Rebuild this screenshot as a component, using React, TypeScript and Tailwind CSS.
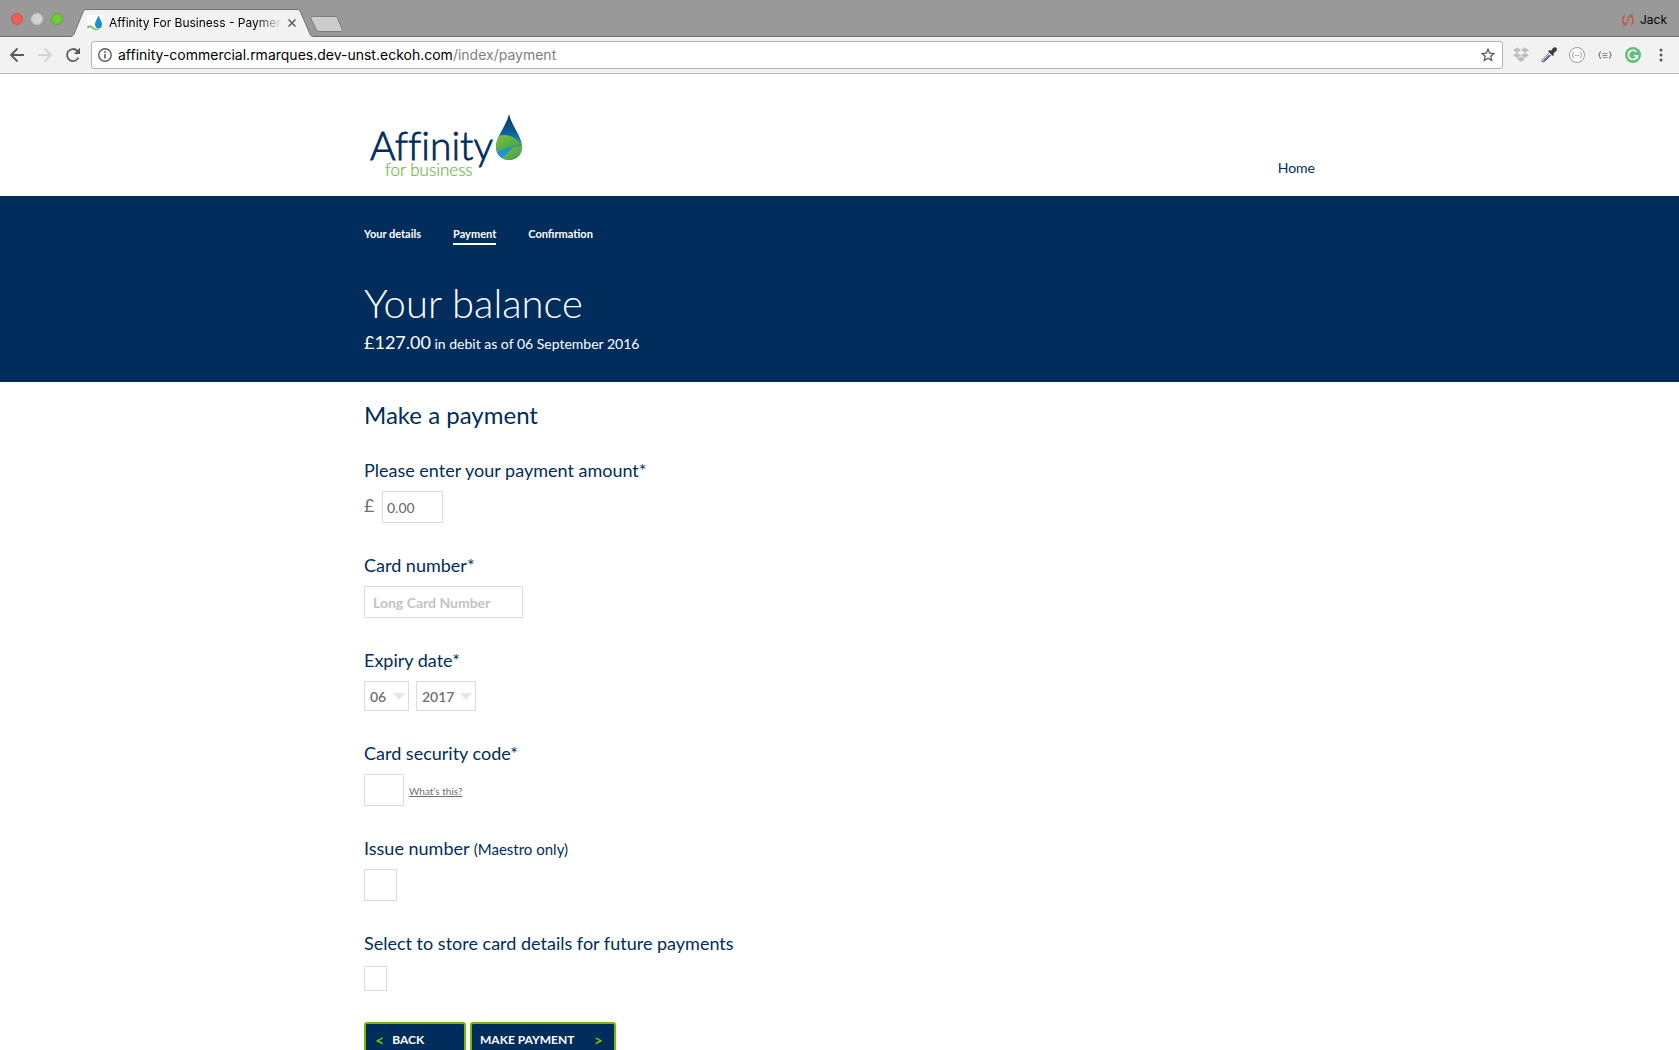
import React from "react";

function TrafficLights() {
  return (
    <div className="flex gap-2 pt-[13px] pl-[11px]">
      <button aria-label="Close window" className="size-3 rounded-full border border-[#dc4f48] bg-[#ec6059]" />
      <button aria-label="Minimise window" className="size-3 rounded-full border border-[#c6c6c6] bg-[#d2d2d2]" />
      <button aria-label="Zoom window" className="size-3 rounded-full border border-[#52ad29] bg-[#6bcb3b]" />
    </div>
  );
}

function Favicon() {
  return (
    <svg viewBox="0 0 16 16" className="size-4 shrink-0" aria-hidden="true">
      <rect width="16" height="16" fill="#fff" />
      <path d="M11.5 0C12.5 4 15 6 15 9.5C15 12 13.500 13.500 11.500 13.500C9.500 13.500 8 12 8 9.500C8 6 10.500 4 11.500 0Z" fill="#1592cf" />
      <path d="M0 11.500C2.500 9 5 10.500 7 12.500C9 14.500 12 14 13.500 12.500C12.500 15.500 8 16.500 5.500 14C3.500 12 2 12.500 0 13.500Z" fill="#8cc474" />
    </svg>
  );
}

function TabStrip() {
  return (
    <div className="flex h-[37px] items-start bg-[#999999] text-black shadow-[inset_0_-1px_0_#707070]">
      <TrafficLights />
      <div className="relative ml-2 flex h-7 w-[243px] items-center self-end pr-[18px] pl-4">
        <svg viewBox="0 0 243 28" className="absolute inset-0 h-7 w-[243px]" aria-hidden="true">
          <path d="M0 27.500C2 27 2.500 26 3 25L12 3C12.700 1.300 13.500 .5 15 .5H226C228 .5 228.800 1.300 229.500 3L239 25C239.500 26.500 240.500 27.500 243 27.500V28H0Z" fill="#f2f2f2" />
          <path d="M0 27.500C2 27 2.500 26 3 25L12 3C12.700 1.300 13.500 .5 15 .5H226C228 .5 228.800 1.300 229.500 3L239 25C239.500 26.500 240.500 27.500 243 27.500" fill="none" stroke="#6e6e6e" />
        </svg>
        <div className="relative flex min-w-0 flex-1 items-center gap-[6px]">
          <Favicon />
          <span className="w-[174px] overflow-hidden text-[12px] leading-4 whitespace-nowrap [mask-image:linear-gradient(to_right,black_85%,transparent)]">
            Affinity For Business - Payment
          </span>
          <button aria-label="Close tab" className="shrink-0">
            <svg viewBox="0 0 8 8" className="size-2" aria-hidden="true">
              <path d="M.5 .5L7.500 7.500M7.500 .5L.5 7.500" stroke="#5a5a5a" strokeWidth="1.500" />
            </svg>
          </button>
        </div>
      </div>
      <button aria-label="New tab" className="mt-4 -ml-1">
        <svg viewBox="0 0 33 16" className="h-4 w-[33px]" aria-hidden="true">
          <path d="M2.500 .5H25C26.500 .5 27 1 27.500 2L32 13C32.500 14.500 32 15.500 30.500 15.500H9C7.500 15.500 7 15 6.500 14L1 2.500C.5 1.500 1 .5 2.500 .5Z" fill="#cccccc" stroke="#7d7d7d" />
        </svg>
      </button>
      <button className="mt-3 mr-3 ml-auto flex items-center gap-[6px] text-[12px] leading-4">
        <svg viewBox="0 0 12 12" className="size-3" fill="none" stroke="#c9503e" aria-hidden="true">
          <path d="M2.800 1.200C.2 3.500 .2 8 2.800 10.300M9.200 10.800C11.800 8.500 11.800 4 9.200 1.700" strokeWidth="1.400" />
          <path d="M3.800 8V11H.8M8.200 4V1H11.200" strokeWidth="1.200" />
          <path d="M6 2.500V7M6 8.200V9.500" strokeWidth="1.300" />
        </svg>
        Jack
      </button>
    </div>
  );
}

function Toolbar() {
  return (
    <div className="flex h-[37px] items-center border-b border-[#b6b6b6] bg-[#f2f2f2] pr-[11px] pl-[9px]">
      <div className="flex gap-[12px] text-[#5a5a5a]">
        <button aria-label="Back">
          <svg viewBox="0 0 16 16" className="size-4" fill="none" stroke="#5a5a5a" strokeWidth="1.800" aria-hidden="true">
            <path d="M15 8H2.500M8.500 1.500L2 8L8.500 14.500" />
          </svg>
        </button>
        <button aria-label="Forward">
          <svg viewBox="0 0 16 16" className="size-4" fill="none" stroke="#d4d4d4" strokeWidth="1.800" aria-hidden="true">
            <path d="M1 8H13.500M7.500 1.500L14 8L7.500 14.500" />
          </svg>
        </button>
        <button aria-label="Reload">
          <svg viewBox="0 0 16 16" className="size-4" aria-hidden="true">
            <path d="M13.500 10.500A6 6 0 1 1 12.300 3.800L14 5.500" fill="none" stroke="#5a5a5a" strokeWidth="1.800" />
            <path d="M15 .8V7H8.800Z" fill="#5a5a5a" />
          </svg>
        </button>
      </div>
      <div className="ml-[10px] flex h-7 flex-1 items-center rounded-[3px] border border-[#b3b3b3] bg-white pr-[7px] pl-[6px]">
        <svg viewBox="0 0 14 14" className="size-[14px]" aria-hidden="true">
          <circle cx="7" cy="7" r="6.200" fill="none" stroke="#5a5a5a" strokeWidth="1.400" />
          <path d="M7 6V10.500M7 3.300V4.900" stroke="#5a5a5a" strokeWidth="1.600" />
        </svg>
        <a href="#address" className="ml-[6px] flex-1 text-[14px] leading-5 text-black">
          affinity-commercial.rmarques.dev-unst.eckoh.com<span className="text-[#808080]">/index/payment</span>
        </a>
        <button aria-label="Bookmark this page">
          <svg viewBox="0 0 14 14" className="size-[14px]" fill="none" stroke="#5a5a5a" strokeWidth="1.300" aria-hidden="true">
            <path d="M7 1.200L8.700 5.100L13 5.500L9.800 8.300L10.700 12.500L7 10.300L3.300 12.500L4.200 8.300L1 5.500L5.300 5.100Z" />
          </svg>
        </button>
      </div>
      <div className="ml-[9px] flex items-center gap-[10px]">
        <button aria-label="Dropbox">
          <svg viewBox="0 0 18 18" className="size-[18px]" fill="#bdbdbd" aria-hidden="true">
            <path d="M5.200 1.500L9 4L5 6.700L1 4.200ZM12.800 1.500L17 4.200L13 6.700L9 4ZM1 9.200L5 6.700L9 9.400L5.200 11.900ZM13 6.700L17 9.200L12.800 11.900L9 9.400ZM5 13L9 10.400L13 13L9 16Z" />
          </svg>
        </button>
        <button aria-label="Colour picker">
          <svg viewBox="0 0 18 18" className="size-[18px]" aria-hidden="true">
            <path d="M2 16L2.500 13.500L9.500 6.500L11.500 8.500L4.500 15.500Z" fill="#fff" stroke="#777" />
            <path d="M3.500 14.500L8.500 9.500H10L4.700 14.800Z" fill="#3f5fd0" stroke="#3f5fd0" />
            <path d="M8 5L9.500 4L11 4.800L13 2C14 .8 15.800 1 16.500 2C17.300 3 17 4.500 16 5.300L13.500 7.200L14 8.700L12.800 10Z" fill="#3b3b40" />
          </svg>
        </button>
        <button aria-label="JSON viewer">
          <svg viewBox="0 0 18 18" className="size-[18px]" fill="none" stroke="#8c8c8c" aria-hidden="true">
            <circle cx="9" cy="9" r="7.500" fill="#fff" stroke="#9a9a9a" />
            <path d="M6 6C4.500 6 5.500 8.500 4 9C5.500 9.500 4.500 12 6 12M12 6C13.500 6 12.500 8.500 14 9C12.500 9.500 13.500 12 12 12M6.800 9.500H7.800M8.500 9.500H9.500M10.200 9.500H11.200" />
          </svg>
        </button>
        <button aria-label="JSON formatter">
          <svg viewBox="0 0 18 18" className="size-[18px]" fill="none" stroke="#7d7d7d" aria-hidden="true">
            <path d="M5 5.500C3 5.500 4.500 8.500 2.500 9C4.500 9.500 3 12.500 5 12.500M13 5.500C15 5.500 13.500 8.500 15.500 9C13.500 9.500 15 12.500 13 12.500" strokeWidth="1.200" />
            <path d="M6.500 7.500H11.500M6.500 9.500H11.500M6.500 11.500H11.500" strokeWidth=".9" />
          </svg>
        </button>
        <button aria-label="Grammarly">
          <svg viewBox="0 0 18 18" className="size-[18px]" aria-hidden="true">
            <circle cx="9" cy="9" r="8" fill="#66bd7c" />
            <path d="M12.300 5.700A4.600 4.600 0 1 0 13.500 9.700H10" fill="none" stroke="#fff" strokeWidth="1.600" />
            <path d="M13.200 9.500V12.500" stroke="#fff" strokeWidth="1.400" />
          </svg>
        </button>
        <button aria-label="Menu" className="ml-[2px]">
          <svg viewBox="0 0 14 18" className="h-[18px] w-[14px]" fill="#5a5a5a" aria-hidden="true">
            <circle cx="7" cy="4" r="1.500" />
            <circle cx="7" cy="9" r="1.500" />
            <circle cx="7" cy="14" r="1.500" />
          </svg>
        </button>
      </div>
    </div>
  );
}

function Logo() {
  return (
    <svg viewBox="0 0 160 70" className="h-[70px] w-40" role="img" aria-label="Affinity for business">
      <defs>
        <linearGradient id="drop" x1="0" y1="0" x2="0" y2="1">
          <stop offset="0" stopColor="#043462" />
          <stop offset=".3" stopColor="#0b5489" />
          <stop offset=".65" stopColor="#1b8fd0" />
          <stop offset="1" stopColor="#1e9ade" />
        </linearGradient>
        <linearGradient id="field" x1="0" y1="0" x2="1" y2="1">
          <stop offset="0" stopColor="#7cc043" />
          <stop offset="1" stopColor="#3f9a46" />
        </linearGradient>
        <clipPath id="dropShape">
          <path d="M145 0C148 13 158 22 158 33C158 41 152.500 46 145 46C137.500 46 132 41 132 33C132 22 142 13 145 0Z" />
        </clipPath>
      </defs>
      <text x="6" y="46" fontFamily="Lato" fontWeight="300" fontSize="39" fill="#002d5c" stroke="#002d5c" strokeWidth=".8" className="[font-variant-ligatures:none]">Affinity</text>
      <text x="21" y="62" fontFamily="Lato" fontWeight="300" fontSize="17" fill="#6cb93f" stroke="#6cb93f" strokeWidth=".2">for business</text>
      <g clipPath="url(#dropShape)">
        <rect x="130" width="30" height="48" fill="url(#drop)" />
        <path d="M131 24C138 19 149 20 159 31C148 31 139 36 131 38Z" fill="url(#field)" />
        <path d="M159 32C150 32 147 34 144 38C142 42 138 44 134 44L140 48H159Z" fill="url(#field)" />
      </g>
    </svg>
  );
}

const label = "mb-[10px] block text-[18px] leading-[22px] text-[#002d5c]";
const box = "block border border-[#dadddd] bg-white text-[14px] text-[#707070] outline-none";

function DateSelect({ name, value, wide }: { name: string; value: string; wide?: boolean }) {
  return (
    <div className="relative">
      <select
        aria-label={name}
        defaultValue={value}
        className={`${box} h-[30px] appearance-none pl-[5px] font-semibold ${wide ? "w-[60px]" : "w-[45px]"}`}
      >
        <option>{value}</option>
      </select>
      <svg viewBox="0 0 12 7" className="pointer-events-none absolute top-3 right-1 h-[7px] w-3" aria-hidden="true">
        <path d="M0 0H12L6 7Z" fill="#e6e6e6" />
      </svg>
    </div>
  );
}

export default function App() {
  return (
    <div className="flex h-screen flex-col bg-white">
      <header className="shrink-0 font-[Inter,Roboto,sans-serif]">
        <TabStrip />
        <Toolbar />
      </header>
      <div className="min-h-0 flex-1 overflow-y-auto font-[Lato,sans-serif] text-[#002d5c] [scrollbar-width:none]">
        <div className="mx-auto flex max-w-[951px] justify-between pt-10 pb-3">
          <a href="#home-page">
            <Logo />
          </a>
          <a href="#home" className="mb-[6px] self-end text-[14px] leading-5">
            Home
          </a>
        </div>
        <section className="bg-[#002d5c] text-white">
          <div className="mx-auto max-w-[951px] pt-[30px] pb-[26px]">
            <nav className="flex gap-8 text-[11px] leading-4 font-bold">
              <a href="#details">Your details</a>
              <a href="#payment" aria-current="page" className="border-b-2 border-white pb-[1px]">Payment</a>
              <a href="#confirmation">Confirmation</a>
            </nav>
            <h1 className="mt-[34px] text-[40px] leading-[48px] font-light">Your balance</h1>
            <p className="mt-[3px] text-[14px] leading-6">
              <span className="text-[18px]">£127.00</span> in debit as of 06 September 2016
            </p>
          </div>
        </section>
        <main className="mx-auto max-w-[951px] pt-[19px] pb-10">
          <h2 className="text-[24px] leading-7">Make a payment</h2>
          <form className="mt-[30px] flex flex-col gap-[31px]" onSubmit={(e) => e.preventDefault()}>
            <div>
              <label htmlFor="amount" className={label}>Please enter your payment amount*</label>
              <div className="flex">
                <span className="w-[18px] text-[18px] leading-7 text-[#707070]">£</span>
                <input id="amount" defaultValue="0.00" className={`${box} h-8 w-[61px] px-1 font-medium`} />
              </div>
            </div>
            <div>
              <label htmlFor="card" className={label}>Card number*</label>
              <input id="card" placeholder="Long Card Number" className={`${box} h-8 w-[159px] px-2 font-bold placeholder:text-[#c4c4c4]`} />
            </div>
            <div>
              <span className={label}>Expiry date*</span>
              <div className="flex gap-[7px]">
                <DateSelect name="Expiry month" value="06" />
                <DateSelect name="Expiry year" value="2017" wide />
              </div>
            </div>
            <div>
              <label htmlFor="code" className={label}>Card security code*</label>
              <div className="flex items-center gap-[5px]">
                <input id="code" className={`${box} h-8 w-10 px-2`} />
                <a href="#code-help" className="pt-[2px] text-[10px] leading-3 text-[#707070] underline">What's this?</a>
              </div>
            </div>
            <div>
              <label htmlFor="issue" className={label}>
                Issue number <span className="text-[15px] leading-none">(Maestro only)</span>
              </label>
              <input id="issue" className={`${box} h-8 w-[33px] px-2`} />
            </div>
            <div>
              <label htmlFor="store" className={label}>Select to store card details for future payments</label>
              <input id="store" type="checkbox" className={`${box} mt-3 h-[25px] w-[23px] appearance-none`} />
            </div>
            <div className="flex gap-1 text-[12px] leading-4 font-bold text-white">
              <button type="button" className="flex h-9 w-[102px] items-center gap-2 rounded-[3px] border-2 border-[#76b900] bg-[#002d5c] px-[9px]">
                <span className="text-[16px] text-[#76b900]">&lt;</span>BACK
              </button>
              <button type="submit" className="flex h-9 w-[146px] items-center justify-between rounded-[3px] border-2 border-[#76b900] bg-[#002d5c] pr-[11px] pl-2">
                MAKE PAYMENT<span className="text-[16px] text-[#76b900]">&gt;</span>
              </button>
            </div>
          </form>
        </main>
      </div>
    </div>
  );
}
